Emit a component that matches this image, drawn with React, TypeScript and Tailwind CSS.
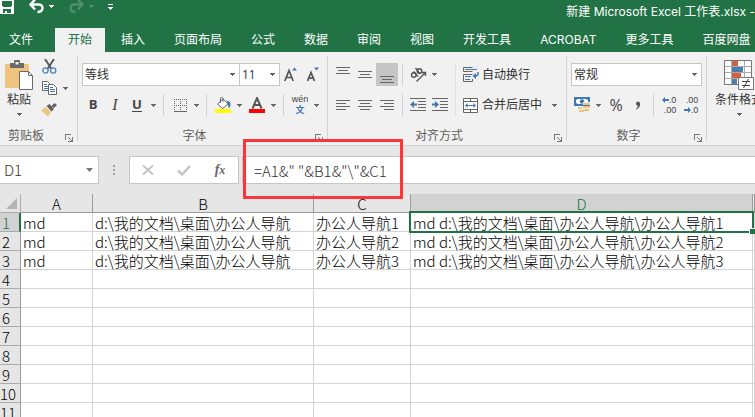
import { useState } from 'react';
import type { ReactNode } from 'react';

const tabs = ['开始', '插入', '页面布局', '公式', '数据', '审阅', '视图', '开发工具', 'ACROBAT', '更多工具', '百度网盘'];

const columns = ['A', 'B', 'C', 'D', ''];

const rows = [
  ['md', 'd:\\我的文档\\桌面\\办公人导航', '办公人导航1', 'md d:\\我的文档\\桌面\\办公人导航\\办公人导航1', ''],
  ['md', 'd:\\我的文档\\桌面\\办公人导航', '办公人导航2', 'md d:\\我的文档\\桌面\\办公人导航\\办公人导航2', ''],
  ['md', 'd:\\我的文档\\桌面\\办公人导航', '办公人导航3', 'md d:\\我的文档\\桌面\\办公人导航\\办公人导航3', ''],
  ...Array.from({ length: 8 }, () => ['', '', '', '', '']),
];

function Caret() {
  return (
    <svg width="5" height="3" viewBox="0 0 5 3" shapeRendering="crispEdges" fill="currentColor">
      <path d="M0 0h5v1H0zM1 1h3v1H1zM2 2h1v1H2z" />
    </svg>
  );
}

function IconButton({ label, active, children }: { label: string; active?: boolean; children: ReactNode }) {
  return (
    <button
      type="button"
      aria-label={label}
      className={`flex h-full w-[22px] shrink-0 items-center justify-center ${active ? 'bg-[#c5c5c5]' : 'hover:bg-[#dcdcdc]'}`}
    >
      {children}
    </button>
  );
}

function MenuButton({ label }: { label: string }) {
  return (
    <button type="button" aria-label={label} className="flex h-full w-[10px] shrink-0 items-center justify-center text-[#666]">
      <Caret />
    </button>
  );
}

function Divider() {
  return <div className="mx-[5px] h-full w-px shrink-0 bg-[#d2d2d2]" />;
}

function Group({ label, width, start, children }: { label: string; width: string; start?: boolean; children: ReactNode }) {
  return (
    <>
      <section aria-label={label} className={`flex shrink-0 flex-col justify-between ${width}`}>
        <div>{children}</div>
        <div className="mb-px flex h-4 items-center pr-1">
          <span className={`flex-1 leading-4 text-[#605e5c] ${start ? 'pl-2' : 'text-center'}`}>{label}</span>
          <button type="button" aria-label={`${label}设置`} className="flex w-3 justify-end pt-1">
            <svg width="8" height="8" viewBox="0 0 8 8" shapeRendering="crispEdges" fill="#777">
              <path d="M0 0h6v1H1v5H0zM3 3h1v1H3zM4 4h1v1H4zM5 5h1v1H5zM7 3h1v5H3V7h3V6h1z" />
            </svg>
          </button>
        </div>
      </section>
      <div className="my-1 w-px shrink-0 bg-[#d2d2d2]" />
    </>
  );
}

function Dropdown({ label, value, className }: { label: string; value: string; className: string }) {
  return (
    <div className={`relative shrink-0 ${className}`}>
      <select
        aria-label={label}
        defaultValue={value}
        className="h-[23px] w-full appearance-none border border-[#c6c6c6] bg-white pl-[2px] text-xs text-[#333] outline-none"
      >
        <option>{value}</option>
      </select>
      <span className="pointer-events-none absolute inset-y-0 right-[5px] flex items-center text-[#666]">
        <Caret />
      </span>
    </div>
  );
}

function Lines({ d }: { d: string }) {
  return (
    <svg width="14" height="22" viewBox="0 0 14 22" shapeRendering="crispEdges" stroke="#666" fill="none">
      <path d={d} />
    </svg>
  );
}

function TitleBar() {
  return (
    <header className="flex h-7 shrink-0 items-start overflow-hidden text-white">
      <button type="button" aria-label="保存">
        <svg width="14" height="14" viewBox="0 0 14 14" shapeRendering="crispEdges">
          <path fill="#fff" d="M0 0h14v14H0z" />
          <path fill="#217346" d="M2 1h10v5h-1v1H3V6H2zM3 9h8v4H7v-2H5v2H3z" />
        </svg>
      </button>
      <button type="button" aria-label="撤消" className="ml-[15px]">
        <svg width="15" height="14" viewBox="0 0 15 14" fill="none" stroke="#fff" strokeWidth="2.400">
          <path d="M6 -.5 1.500 4.500 6 9.500M2 4.500h7.500c3 0 4 1.500 4 3.500S12 12 8.500 12" />
        </svg>
      </button>
      <button type="button" aria-label="撤消列表" className="ml-[5px] pt-[5px]">
        <Caret />
      </button>
      <button type="button" aria-label="恢复" className="ml-[15px] text-[#4f8f6e]">
        <svg width="15" height="14" viewBox="0 0 15 14" fill="none" stroke="currentColor" strokeWidth="2.400">
          <path d="M9 -.5 13.500 4.500 9 9.500M13 4.500H5.500c-3 0-4 1.500-4 3.500S3 12 6.500 12" />
        </svg>
      </button>
      <button type="button" aria-label="恢复列表" className="ml-[5px] pt-[5px] text-[#4f8f6e]">
        <Caret />
      </button>
      <button type="button" aria-label="自定义快速访问工具栏" className="ml-[14px] flex flex-col gap-[2px] pt-1">
        <span className="h-px w-[5px] bg-white" />
        <Caret />
      </button>
      <h1 className="ml-auto pt-1 text-xs leading-4 whitespace-nowrap">新建 Microsoft Excel 工作表.xlsx -</h1>
    </header>
  );
}

function Clipboard() {
  return (
    <Group label="剪贴板" width="w-[77px]" start>
      <div className="flex pt-[3px]">
        <button type="button" className="flex w-[38px] flex-col items-center pt-[5px] text-[#333]">
          <svg width="28" height="31" viewBox="0 0 28 31">
            <path fill="#eec47e" d="M0 4h24v24H0z" />
            <path fill="#6a6a6a" d="M5 3h4V1q0-1 1-1h4q1 0 1 1v2h4v5H5z" />
            <path fill="#f1f1f1" d="M10.500 2h3v2.500h-3z" />
            <path fill="#fff" stroke="#6a6a6a" d="M14.500 11.500h9l4 4v14h-13z" />
            <path fill="none" stroke="#6a6a6a" d="M23.500 11.500v4h4" />
          </svg>
          <span className="mt-px leading-4">粘贴</span>
          <span className="mt-[5px] text-[#666]">
            <Caret />
          </span>
        </button>
        <div className="flex flex-col">
          <div className="flex h-[22px]">
            <IconButton label="剪切">
              <svg width="15" height="15" viewBox="0 0 15 15" fill="none">
                <path stroke="#5a5a5a" strokeWidth="2" d="M3 0l6.500 10M12 0 5.500 10" />
                <circle cx="3.500" cy="11.500" r="2.600" stroke="#4a7fb5" strokeWidth="1.300" />
                <circle cx="11.200" cy="11.500" r="2.600" stroke="#4a7fb5" strokeWidth="1.300" />
              </svg>
            </IconButton>
          </div>
          <div className="flex h-[22px]">
            <IconButton label="复制">
              <svg width="15" height="14" viewBox="0 0 15 14">
                <path fill="#fff" stroke="#666" d="M.5.5h5l2 2v7h-7z" />
                <path stroke="#3f78b5" d="M2 3.500h3M2 5.500h4M2 7.500h4" />
                <path fill="#fff" stroke="#666" d="M6.500 3.500h5l3 3v7h-8z" />
                <path stroke="#3f78b5" d="M8 6.500h3M8 8.500h5M8 10.500h5" />
              </svg>
            </IconButton>
            <MenuButton label="复制选项" />
          </div>
          <div className="flex h-[22px]">
            <IconButton label="格式刷">
              <svg width="16" height="14" viewBox="0 0 16 14">
                <path fill="#5f5f5f" d="M13.500 0 16 2l-3 3-2.500-2zM5.500 3l3-2L13 6l-2.500 2.500z" />
                <path fill="#eec47e" d="M0 7.500 4.500 4 10 9l-3 4.500z" />
              </svg>
            </IconButton>
          </div>
        </div>
      </div>
    </Group>
  );
}

function FontGroup() {
  return (
    <Group label="字体" width="w-[249px]">
      <div className="flex h-[34px] px-1 pt-[11px]">
        <Dropdown label="字体名称" value="等线" className="w-[158px]" />
        <Dropdown label="字号" value="11" className="-ml-px w-[41px]" />
        <IconButton label="增大字号">
          <svg width="14" height="16" viewBox="0 0 14 16" fill="none">
            <path stroke="#555" strokeWidth="1.700" d="M.8 14 5 3.500 9.200 14M2.500 10.500h5" />
            <path fill="#3f78b5" d="M8 3.500 10.500.5l2.500 3z" />
          </svg>
        </IconButton>
        <IconButton label="减小字号">
          <svg width="14" height="16" viewBox="0 0 14 16" fill="none">
            <path stroke="#555" strokeWidth="1.700" d="M1.500 14 5 5.500 8.500 14M2.700 11.200h4.600" />
            <path fill="#3f78b5" d="M8 .5h5l-2.500 3z" />
          </svg>
        </IconButton>
      </div>
      <div className="mt-2 flex h-[22px] px-1 text-[13px] text-[#444]">
        <IconButton label="加粗">
          <b>B</b>
        </IconButton>
        <IconButton label="倾斜">
          <i className="font-['Liberation_Serif',serif] text-base">I</i>
        </IconButton>
        <IconButton label="下划线">
          <b className="underline underline-offset-2">U</b>
        </IconButton>
        <MenuButton label="下划线选项" />
        <Divider />
        <IconButton label="边框">
          <svg width="13" height="13" viewBox="0 0 13 13" shapeRendering="crispEdges" stroke="#666">
            <path strokeDasharray="1 1" d="M0 .5h13M0 6.500h13M.5 0v13M6.500 0v13M12.500 0v13" />
            <path d="M0 12.500h13" />
          </svg>
        </IconButton>
        <MenuButton label="边框选项" />
        <Divider />
        <IconButton label="填充颜色">
          <svg width="16" height="16" viewBox="0 0 16 16">
            <path fill="#fff" stroke="#666" d="M2.500 7 8 2l5 5-5.500 4.500z" />
            <path fill="none" stroke="#666" d="M5.500 6V1.500q0-1 1.300-1T8 1.500V5" />
            <path fill="#3f78b5" d="M11.500 3.500q4 .5 4 3.500t-1.500 4q-1-1-1-4z" />
            <path fill="#ff0" d="M0 12h16v4H0z" />
          </svg>
        </IconButton>
        <MenuButton label="填充颜色选项" />
        <div className="w-[2px]" />
        <IconButton label="字体颜色">
          <svg width="16" height="16" viewBox="0 0 16 16">
            <path fill="none" stroke="#555" strokeWidth="2" d="M3.500 11.500 8 1l4.500 10.500M5 8h6" />
            <path fill="#f00" d="M0 12h16v4H0z" />
          </svg>
        </IconButton>
        <MenuButton label="字体颜色选项" />
        <Divider />
        <IconButton label="拼音指南">
          <span className="flex flex-col items-center">
            <span className="font-['Liberation_Sans',sans-serif] text-[9px] leading-[10px]">wén</span>
            <span className="text-[9px] leading-[12px] font-bold text-[#3f78b5]">文</span>
          </span>
        </IconButton>
        <MenuButton label="拼音选项" />
      </div>
    </Group>
  );
}

function AlignGroup() {
  return (
    <Group label="对齐方式" width="w-[238px]">
      <div className="flex pt-[11px] pl-1">
        <div className="flex flex-col gap-2">
          <div className="flex h-[23px]">
            <IconButton label="顶端对齐">
              <Lines d="M0 3.500h14M2 6.500h10M0 9.500h14" />
            </IconButton>
            <IconButton label="垂直居中">
              <Lines d="M0 7.500h14M2 10.500h10M0 13.500h14" />
            </IconButton>
            <IconButton label="底端对齐" active>
              <Lines d="M0 12.500h14M2 15.500h10M0 18.500h14" />
            </IconButton>
            <div className="mx-1 w-px bg-[#d2d2d2]" />
            <IconButton label="方向">
              <svg width="17" height="15" viewBox="0 0 17 15" fill="none" stroke="#555" strokeWidth="1.400">
                <circle cx="3.800" cy="8" r="2.300" />
                <path d="M3.500 4.500 8 9.500M5.500 1l4.500 6" />
                <circle cx="9.500" cy="4" r="2.300" />
                <path d="M6.500 14.500 15.500 5.500M12 5.500h3.500V9" />
              </svg>
            </IconButton>
            <MenuButton label="方向选项" />
          </div>
          <div className="flex h-[22px]">
            <IconButton label="左对齐">
              <Lines d="M0 6.500h14M0 9.500h10M0 12.500h14M0 15.500h10" />
            </IconButton>
            <IconButton label="居中">
              <Lines d="M0 6.500h14M2 9.500h10M0 12.500h14M2 15.500h10" />
            </IconButton>
            <IconButton label="右对齐">
              <Lines d="M0 6.500h14M4 9.500h10M0 12.500h14M4 15.500h10" />
            </IconButton>
            <div className="mx-1 w-px bg-[#d2d2d2]" />
            <IconButton label="减少缩进量">
              <svg width="16" height="14" viewBox="0 0 16 14" fill="none">
                <path stroke="#666" d="M0 .5h16M8 3.500h8M8 6.500h8M8 9.500h8M0 12.500h16" />
                <path fill="#3f78b5" d="M0 6.500 4 3v2.500h3v2H4V10z" />
              </svg>
            </IconButton>
            <IconButton label="增加缩进量">
              <svg width="16" height="14" viewBox="0 0 16 14" fill="none">
                <path stroke="#666" d="M0 .5h16M8 3.500h8M8 6.500h8M8 9.500h8M0 12.500h16" />
                <path fill="#3f78b5" d="M7 6.500 3 3v2.500H0v2h3V10z" />
              </svg>
            </IconButton>
          </div>
        </div>
        <div className="mx-1 w-px bg-[#e0e0e0]" />
        <div className="flex flex-col gap-2 pl-[3px] text-[#333]">
          <button type="button" className="flex h-[23px] items-center gap-[3px] whitespace-nowrap">
            <svg width="16" height="16" viewBox="0 0 16 16" fill="none">
              <path stroke="#666" d="M9.500.5h-9v4h9M9.500 7.500h-9v7h9V12" />
              <path stroke="#3f78b5" d="M2 2.500h12M2 9.500h6M2 12.500h5" />
              <path stroke="#3f78b5" strokeWidth="1.500" d="M15 5v2q0 2-3 2h-1" />
              <path fill="#3f78b5" d="M9.500 9 13 6v6z" />
            </svg>
            自动换行
          </button>
          <div className="flex h-[22px]">
            <button type="button" className="flex items-center gap-[3px] whitespace-nowrap">
              <svg width="16" height="15" viewBox="0 0 16 15" fill="none">
                <path fill="#fff" stroke="#666" d="M.5.5h14v14H.5zM.5 3.500h14M.5 11.500h14M7.500.5v3M7.500 11.500v3" />
                <path stroke="#3f78b5" d="M3 7.500h9" />
                <path fill="#3f78b5" d="M2 7.500 4.500 5v5zM13 7.500 10.500 5v5z" />
              </svg>
              合并后居中
            </button>
            <div className="ml-[7px] flex">
              <MenuButton label="合并选项" />
            </div>
          </div>
        </div>
      </div>
    </Group>
  );
}

function NumberGroup() {
  return (
    <Group label="数字" width="w-[139px]">
      <div className="flex h-[34px] px-1 pt-[11px]">
        <Dropdown label="数字格式" value="常规" className="w-[131px]" />
      </div>
      <div className="mt-2 flex h-[22px] px-1 text-[#444]">
        <IconButton label="会计数字格式">
          <svg width="17" height="16" viewBox="0 0 17 16">
            <path fill="#3f78b5" d="M0 0h16v9H0z" />
            <path fill="#fff" d="M2 3l2-1h8l2 1v3l-2 1H4L2 6z" />
            <circle cx="8" cy="4.500" r="2.200" fill="#3f78b5" />
            <path fill="#f1f1f1" d="M9 5h8v3H9zM4 9h12v7H4z" />
            <path fill="#eec47e" d="M10 6h5l1 1-1 1h-5L9 7zM9 9h7v2H9zM9 12h6v2H9zM4 10h4v2H4zM5 13h5v2H5z" />
          </svg>
        </IconButton>
        <MenuButton label="货币选项" />
        <div className="w-[2px]" />
        <IconButton label="百分比样式">
          <span className="text-base">%</span>
        </IconButton>
        <IconButton label="千位分隔样式">
          <svg width="6" height="9" viewBox="0 0 6 9">
            <path fill="#555" d="M1 2.500Q1 .5 3 .5t2.200 2.500Q5 7 1 8.500v-1Q3 6.500 3 5 1 4.500 1 2.500z" />
          </svg>
        </IconButton>
        <div className="mx-1 w-px bg-[#d2d2d2]" />
        <IconButton label="增加小数位数">
          <span className="flex flex-col items-end font-['Liberation_Sans',sans-serif] text-[9px] leading-[10px]">
            <span className="flex items-center">
              <svg width="7" height="6" viewBox="0 0 7 6">
                <path fill="#3f78b5" d="M0 3l3-3v2h4v2H3v2z" />
              </svg>
              .0
            </span>
            <span>.00</span>
          </span>
        </IconButton>
        <IconButton label="减少小数位数">
          <span className="flex flex-col items-end font-['Liberation_Sans',sans-serif] text-[9px] leading-[10px]">
            <span>.00</span>
            <span className="flex items-center">
              <svg width="7" height="6" viewBox="0 0 7 6">
                <path fill="#3f78b5" d="M7 3 4 0v2H0v2h4v2z" />
              </svg>
              .0
            </span>
          </span>
        </IconButton>
      </div>
    </Group>
  );
}

function Ribbon() {
  return (
    <div className="flex h-[94px] shrink-0 overflow-hidden border-b border-[#d2d2d2] bg-[#f1f1f1] font-['Open_Sans','Noto_Sans_CJK_SC',sans-serif] text-xs">
      <Clipboard />
      <FontGroup />
      <AlignGroup />
      <NumberGroup />
      <button type="button" className="flex w-16 shrink-0 flex-col items-center pt-2 text-[#333]">
        <svg width="30" height="31" viewBox="0 0 30 31">
          <path fill="#fff" stroke="#777" d="M.5.5h27v24H.5z" />
          <path stroke="#aaa" d="M1 6.500h26M1 12.500h26M1 18.500h26M7.500 1v23M20.500 1v23" />
          <path fill="#d65f3e" d="M8 1h6v5H8zM8 13h9v5H8z" />
          <path fill="#4a7fb5" d="M8 7h11v5H8zM8 19h5v5H8z" />
          <path fill="#fff" stroke="#777" d="M14.500 17.500h15v12h-15z" />
          <path fill="none" stroke="#444" d="M18 21.500h8M18 25.500h8M24.500 19l-5 9" />
        </svg>
        <span className="mt-px leading-4 whitespace-nowrap">条件格式</span>
        <span className="mt-[5px] text-[#666]">
          <Caret />
        </span>
      </button>
    </div>
  );
}

function FormulaBar() {
  const [formula, setFormula] = useState('=A1&" "&B1&"\\"&C1');

  return (
    <div className="flex h-12 shrink-0 items-start bg-[#e6e6e6] pt-[10px] font-['Noto_Sans_CJK_SC',sans-serif] text-[15px] font-light text-[#333]">
      <div className="flex h-7 w-[99px] shrink-0 items-center border border-l-0 border-[#c6c6c6] bg-white pr-[5px]">
        <input aria-label="名称框" defaultValue="D1" className="w-full min-w-0 bg-transparent pl-1 outline-none" />
        <button type="button" aria-label="名称列表" className="text-[#777]">
          <svg width="7" height="4" viewBox="0 0 7 4" fill="currentColor">
            <path d="M0 0h7L3.500 4z" />
          </svg>
        </button>
      </div>
      <div className="flex h-7 w-[30px] shrink-0 flex-col items-center justify-center gap-[2px]">
        <span className="size-[2px] bg-[#a0a0a0]" />
        <span className="size-[2px] bg-[#a0a0a0]" />
        <span className="size-[2px] bg-[#a0a0a0]" />
      </div>
      <div className="flex h-7 w-[110px] shrink-0 border border-[#c6c6c6] bg-white">
        <button type="button" aria-label="取消" className="flex flex-1 items-center justify-center">
          <svg width="12" height="10" viewBox="0 0 12 10" stroke="#c4c4c4" strokeWidth="2">
            <path d="M1 .5 11 9.500M11 .5 1 9.500" />
          </svg>
        </button>
        <button type="button" aria-label="输入" className="flex flex-1 items-center justify-center">
          <svg width="14" height="11" viewBox="0 0 14 11" fill="none" stroke="#c4c4c4" strokeWidth="2.500">
            <path d="M1 5.500 5 9.500 13 1" />
          </svg>
        </button>
        <button
          type="button"
          aria-label="插入函数"
          className="flex-1 font-['Liberation_Serif',serif] text-sm leading-6 font-bold text-[#666] italic"
        >
          f<span className="text-xs">x</span>
        </button>
      </div>
      <div className="relative ml-[3px] min-w-0 flex-1">
        <input
          aria-label="编辑栏"
          value={formula}
          onChange={(event) => setFormula(event.target.value)}
          className="h-7 w-full border border-r-0 border-[#c6c6c6] bg-white pl-[11px] outline-none"
        />
        {/* highlight frame around the formula */}
        <div className="pointer-events-none absolute -top-[17px] left-px z-10 h-[60px] w-[160px] border-[3px] border-[#fc3636]" />
      </div>
    </div>
  );
}

function Sheet() {
  return (
    <div className="relative min-h-0 flex-1 overflow-hidden bg-white">
      <table className="w-full min-w-[755px] table-fixed border-separate border-spacing-0 font-['Noto_Sans_CJK_SC',sans-serif] text-[15px] leading-4 font-light text-black">
        <colgroup>
          <col className="w-[21px]" />
          <col className="w-[72px]" />
          <col className="w-[221px]" />
          <col className="w-[97px]" />
          <col className="w-[342px]" />
          <col />
        </colgroup>
        <thead>
          <tr className="h-[19px] bg-[#e6e6e6]">
            <th aria-label="全选" className="border-r border-b border-[#ababab] p-0">
              <svg width="11" height="11" viewBox="0 0 11 11" className="mr-[3px] ml-auto">
                <path fill="#b4b4b4" d="M11 0v11H0z" />
              </svg>
            </th>
            {columns.map((name) => (
              <th
                key={name}
                scope="col"
                className={`border-r border-b border-[#9b9b9b] p-0 pt-[2px] font-light ${name === 'D' ? 'bg-[#d2d2d2] text-[#217346]' : 'text-black'}`}
              >
                {name}
              </th>
            ))}
          </tr>
        </thead>
        <tbody>
          {rows.map((cells, row) => (
            <tr key={row} className="h-[19px]">
              <th
                scope="row"
                className={`border-b border-b-[#ababab] p-0 pt-[2px] font-light ${
                  row === 0
                    ? 'border-r-2 border-r-[#217346] bg-[#d2d2d2] pr-[7px] text-[#217346]'
                    : 'border-r border-r-[#9b9b9b] bg-[#e6e6e6] pr-2 text-black'
                }`}
              >
                {row + 1}
              </th>
              {cells.map((text, column) => {
                const selected = row === 0 && column === 3;
                return (
                  <td
                    key={column}
                    className={`border-r border-b border-[#d4d4d4] p-0 pt-[2px] whitespace-nowrap ${column < 4 ? 'pl-[2px]' : ''} ${selected ? 'relative' : ''}`}
                  >
                    {text}
                    {selected && (
                      <div className="pointer-events-none absolute -inset-[2px] border-2 border-[#217346]">
                        <span className="absolute -right-[3px] -bottom-[3px] size-[6px] border-t border-l border-white bg-[#217346]" />
                      </div>
                    )}
                  </td>
                );
              })}
            </tr>
          ))}
        </tbody>
      </table>
    </div>
  );
}

export default function App() {
  const [activeTab, setActiveTab] = useState('开始');

  return (
    <main className="flex h-screen flex-col overflow-hidden bg-[#217346] font-['Inter','Noto_Sans_CJK_SC',sans-serif]">
      <TitleBar />
      <nav className="flex h-6 shrink-0 gap-[3px] overflow-hidden text-xs text-white">
        <button type="button" className="w-[52px] shrink-0 pl-[9px] text-left">
          文件
        </button>
        {tabs.map((tab) => (
          <button
            key={tab}
            type="button"
            onClick={() => setActiveTab(tab)}
            className={`shrink-0 px-[13px] whitespace-nowrap ${tab === activeTab ? 'bg-[#f1f1f1] text-[#217346]' : ''}`}
          >
            {tab}
          </button>
        ))}
      </nav>
      <Ribbon />
      <FormulaBar />
      <Sheet />
    </main>
  );
}
